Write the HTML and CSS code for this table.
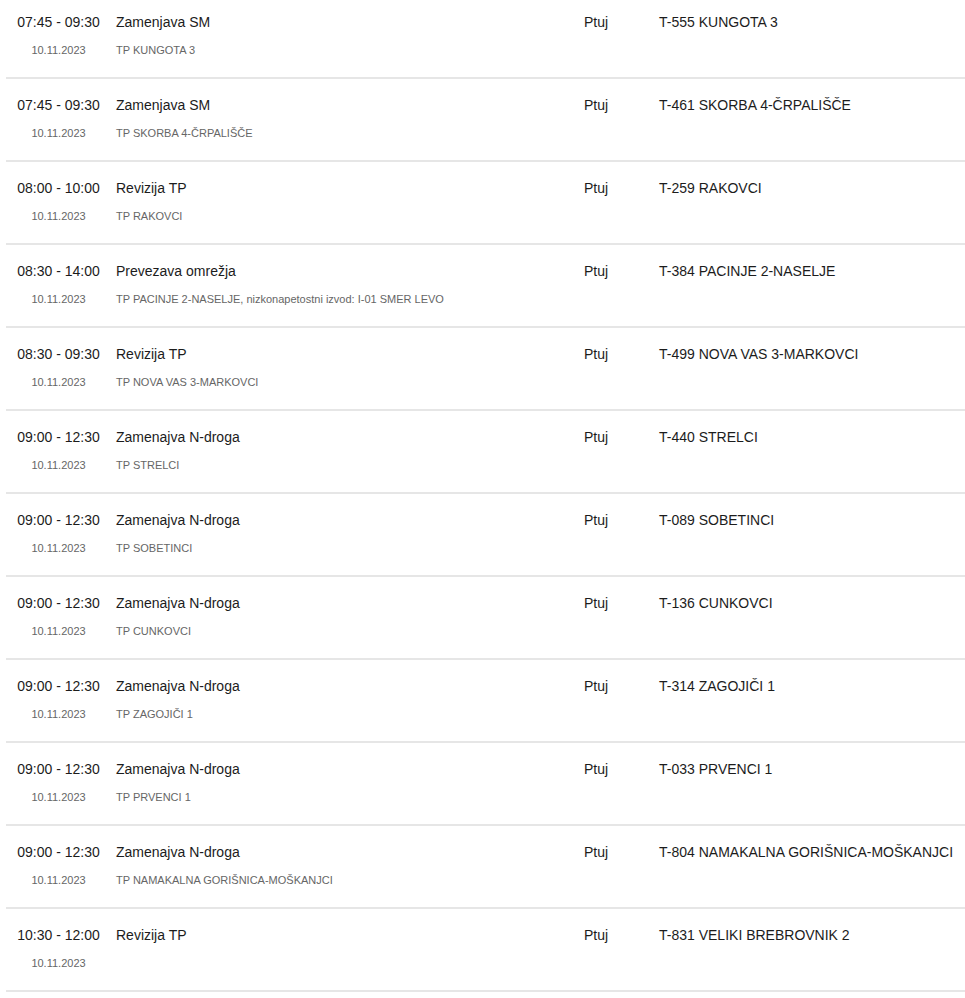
FILE: index.html
```html
<!DOCTYPE html>
<html lang="sl">
<head>
<meta charset="utf-8">
<title>Izklopi</title>
<link rel="stylesheet" href="styles.css">
</head>
<body>
<div class="list">
  <div class="row">
    <div class="time">07:45 - 09:30</div><div class="title">Zamenjava SM</div><div class="place">Ptuj</div><div class="loc">T-555 KUNGOTA 3</div>
    <div class="date">10.11.2023</div><div class="desc">TP KUNGOTA 3</div>
  </div>
  <div class="row">
    <div class="time">07:45 - 09:30</div><div class="title">Zamenjava SM</div><div class="place">Ptuj</div><div class="loc">T-461 SKORBA 4-ČRPALIŠČE</div>
    <div class="date">10.11.2023</div><div class="desc">TP SKORBA 4-ČRPALIŠČE</div>
  </div>
  <div class="row">
    <div class="time">08:00 - 10:00</div><div class="title">Revizija TP</div><div class="place">Ptuj</div><div class="loc">T-259 RAKOVCI</div>
    <div class="date">10.11.2023</div><div class="desc">TP RAKOVCI</div>
  </div>
  <div class="row">
    <div class="time">08:30 - 14:00</div><div class="title">Prevezava omrežja</div><div class="place">Ptuj</div><div class="loc">T-384 PACINJE 2-NASELJE</div>
    <div class="date">10.11.2023</div><div class="desc">TP PACINJE 2-NASELJE, nizkonapetostni izvod: I-01 SMER LEVO</div>
  </div>
  <div class="row">
    <div class="time">08:30 - 09:30</div><div class="title">Revizija TP</div><div class="place">Ptuj</div><div class="loc">T-499 NOVA VAS 3-MARKOVCI</div>
    <div class="date">10.11.2023</div><div class="desc">TP NOVA VAS 3-MARKOVCI</div>
  </div>
  <div class="row">
    <div class="time">09:00 - 12:30</div><div class="title">Zamenajva N-droga</div><div class="place">Ptuj</div><div class="loc">T-440 STRELCI</div>
    <div class="date">10.11.2023</div><div class="desc">TP STRELCI</div>
  </div>
  <div class="row">
    <div class="time">09:00 - 12:30</div><div class="title">Zamenajva N-droga</div><div class="place">Ptuj</div><div class="loc">T-089 SOBETINCI</div>
    <div class="date">10.11.2023</div><div class="desc">TP SOBETINCI</div>
  </div>
  <div class="row">
    <div class="time">09:00 - 12:30</div><div class="title">Zamenajva N-droga</div><div class="place">Ptuj</div><div class="loc">T-136 CUNKOVCI</div>
    <div class="date">10.11.2023</div><div class="desc">TP CUNKOVCI</div>
  </div>
  <div class="row">
    <div class="time">09:00 - 12:30</div><div class="title">Zamenajva N-droga</div><div class="place">Ptuj</div><div class="loc">T-314 ZAGOJIČI 1</div>
    <div class="date">10.11.2023</div><div class="desc">TP ZAGOJIČI 1</div>
  </div>
  <div class="row">
    <div class="time">09:00 - 12:30</div><div class="title">Zamenajva N-droga</div><div class="place">Ptuj</div><div class="loc">T-033 PRVENCI 1</div>
    <div class="date">10.11.2023</div><div class="desc">TP PRVENCI 1</div>
  </div>
  <div class="row">
    <div class="time">09:00 - 12:30</div><div class="title">Zamenajva N-droga</div><div class="place">Ptuj</div><div class="loc">T-804 NAMAKALNA GORIŠNICA-MOŠKANJCI</div>
    <div class="date">10.11.2023</div><div class="desc">TP NAMAKALNA GORIŠNICA-MOŠKANJCI</div>
  </div>
  <div class="row">
    <div class="time">10:30 - 12:00</div><div class="title">Revizija TP</div><div class="place">Ptuj</div><div class="loc">T-831 VELIKI BREBROVNIK 2</div>
    <div class="date">10.11.2023</div><div class="desc"></div>
  </div>
</div>
</body>
</html>
```

FILE: styles.css
```css
html, body {
  margin: 0;
  padding: 0;
  background: #ffffff;
}
body {
  font-family: "Liberation Sans", Arial, sans-serif;
  color: #1a1a1a;
  overflow: hidden;
}
.list {
  margin-top: -4px;
  padding-left: 6px;
}
.row {
  display: grid;
  grid-template-columns: 105px 473px 75px 1fr;
  row-gap: 14px;
  padding: 18px 0 20px;
  border-bottom: 2px solid #e6e6e6;
}
.time, .title, .place, .loc {
  font-size: 14px;
  line-height: 16px;
  color: #1c1c1c;
  white-space: nowrap;
}
.time {
  text-align: center;
}
.title, .desc {
  padding-left: 5px;
}
.date, .desc {
  font-size: 11px;
  line-height: 13px;
  color: #666666;
  white-space: nowrap;
}
.date {
  text-align: center;
}
```
